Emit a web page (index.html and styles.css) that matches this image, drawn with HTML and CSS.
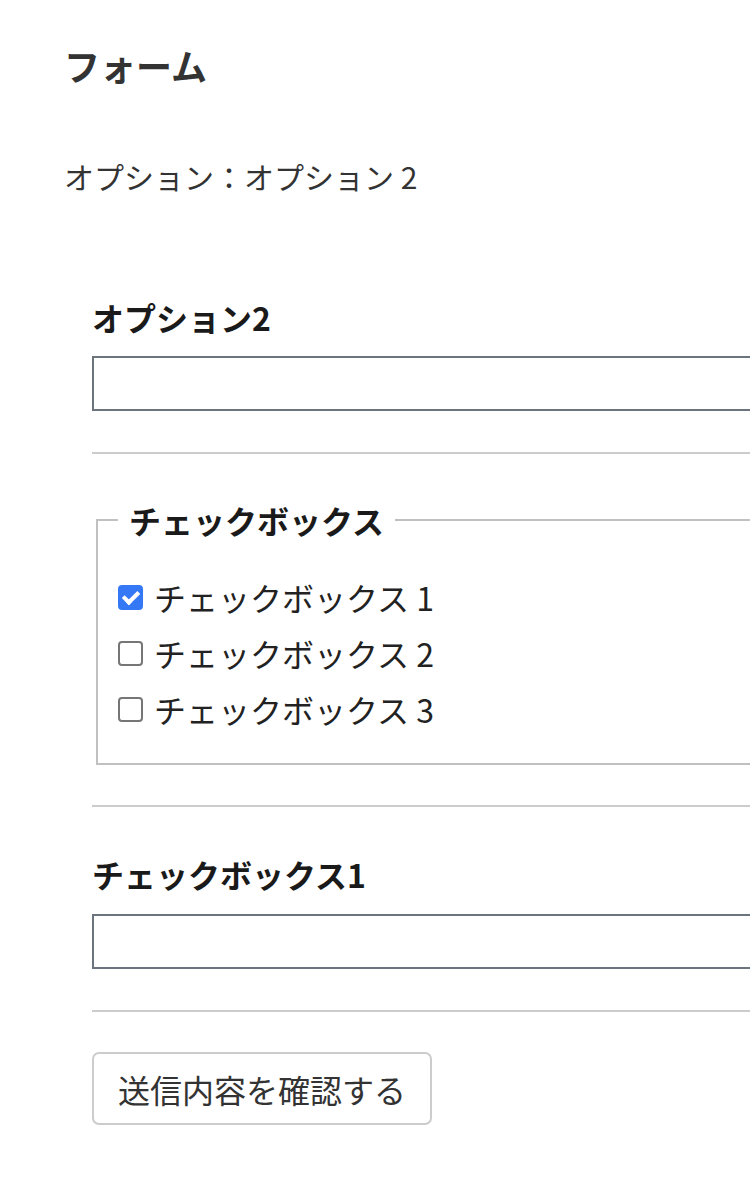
FILE: index.html
```html
<!DOCTYPE html>
<html lang="ja">
<head>
<meta charset="utf-8">
<title>フォーム</title>
<link rel="stylesheet" href="styles.css">
</head>
<body>
<div class="page">
  <h1 class="title">フォーム</h1>
  <p class="summary">オプション：オプション 2</p>
  <form class="form">
    <div class="field">
      <label class="field-label" for="opt2">オプション2</label>
      <input class="text-input" id="opt2" type="text">
    </div>
    <hr class="divider">
    <fieldset class="group">
      <legend class="group-legend">チェックボックス</legend>
      <label class="check"><input class="check-box" type="checkbox" checked><span>チェックボックス 1</span></label>
      <label class="check"><input class="check-box" type="checkbox"><span>チェックボックス 2</span></label>
      <label class="check"><input class="check-box" type="checkbox"><span>チェックボックス 3</span></label>
    </fieldset>
    <hr class="divider divider-after-group">
    <div class="field field-second">
      <label class="field-label" for="cb1">チェックボックス1</label>
      <input class="text-input text-input-second" id="cb1" type="text">
    </div>
    <hr class="divider">
    <button class="submit" type="button">送信内容を確認する</button>
  </form>
</div>
</body>
</html>
```
FILE: styles.css
```css
html, body {
  margin: 0;
  padding: 0;
  background: #fff;
  overflow: hidden;
}

body {
  font-family: "Noto Sans CJK JP", "Noto Sans", sans-serif;
  color: #333;
}

.page {
  padding-left: 64px;
}

.title {
  margin: 41px 0 0;
  font-size: 36px;
  line-height: 48px;
  font-weight: 700;
  color: #333;
}

.summary {
  margin: 67px 0 0;
  font-size: 30px;
  line-height: 40px;
  color: #333;
}

.form {
  margin: 99px 0 0 28px;
  width: 760px;
}

.field-label {
  display: block;
  font-size: 32px;
  line-height: 44px;
  font-weight: 700;
  color: #1a1a1a;
}

.text-input {
  display: block;
  box-sizing: border-box;
  width: 100%;
  height: 55px;
  margin: 17px 0 0;
  padding: 0 12px;
  border: 2px solid #6c757d;
  border-radius: 0;
  background: #fff;
  font: inherit;
  font-size: 30px;
  outline: none;
}

.text-input-second {
  margin-top: 18px;
}

.divider {
  margin: 41px 0 0;
  border: 0;
  height: 2px;
  background: #cccccc;
}

.divider-after-group {
  margin-top: 40px;
}

.group {
  margin: 44px 0 0 4px;
  padding: 27px 20px 26px;
  border: 2px solid #c0c0c0;
  min-width: 0;
}

.group-legend {
  padding: 0 11px;
  font-size: 32px;
  line-height: 44px;
  font-weight: 700;
  color: #1a1a1a;
}

.check {
  display: flex;
  align-items: center;
  height: 56px;
  font-size: 32px;
  color: #222;
}

.check-box {
  -webkit-appearance: none;
  appearance: none;
  position: relative;
  box-sizing: border-box;
  width: 25px;
  height: 25px;
  margin: 0 11px 0 0;
  border: 2px solid #767676;
  border-radius: 4px;
  background: #fff;
  flex: none;
}

.check-box:checked {
  background: #3478f6;
  border-color: #3478f6;
}

.check-box:checked::after {
  content: "";
  position: absolute;
  left: 6px;
  top: 1px;
  width: 6px;
  height: 12px;
  border: solid #fff;
  border-width: 0 4px 4px 0;
  transform: rotate(45deg);
}

.field-second {
  margin-top: 45px;
}

.submit {
  display: block;
  margin: 40px 0 0;
  height: 73px;
  padding: 0 24px;
  border: 2px solid #cccccc;
  border-radius: 7px;
  background: #fff;
  font-family: "Noto Sans CJK JP", "Noto Sans", sans-serif;
  font-size: 32px;
  color: #333;
}
```
